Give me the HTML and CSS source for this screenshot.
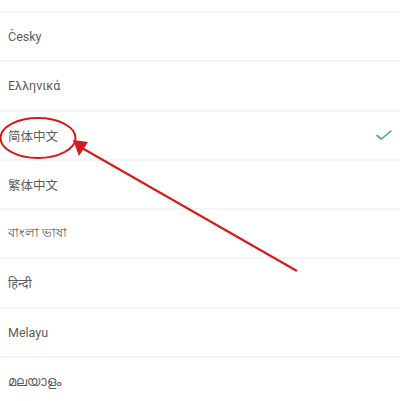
FILE: index.html
```html
<!DOCTYPE html>
<html>
<head>
<meta charset="utf-8">
<link rel="stylesheet" href="styles.css">
</head>
<body>
<div class="page">
  <ul class="lang-list">
    <li class="lang-item lang-item--cut"></li>
    <li class="lang-item"><span class="lang-name">Česky</span></li>
    <li class="lang-item"><span class="lang-name">Ελληνικά</span></li>
    <li class="lang-item lang-item--selected"><span class="lang-name">简体中文</span>
      <svg class="check" width="18" height="14" viewBox="0 0 18 14"><path d="M2 7.5 L6.5 11 L16 3" fill="none" stroke="#4caf50" stroke-width="1.6" stroke-linecap="round" stroke-linejoin="round"/></svg>
    </li>
    <li class="lang-item"><span class="lang-name">繁体中文</span></li>
    <li class="lang-item"><span class="lang-name">বাংলা ভাষা</span></li>
    <li class="lang-item"><span class="lang-name">हिन्दी</span></li>
    <li class="lang-item"><span class="lang-name">Melayu</span></li>
    <li class="lang-item"><span class="lang-name">മലയാളം</span></li>
  </ul>
  <svg class="annotation" width="400" height="401" viewBox="0 0 400 401">
    <ellipse cx="38" cy="138" rx="37.5" ry="20" fill="none" stroke="#d41c1c" stroke-width="2"/>
    <line x1="297" y1="271" x2="82" y2="148" stroke="#d41c1c" stroke-width="2.2"/>
    <polygon points="73,140 88,142 79,156" fill="#d41c1c"/>
  </svg>
</div>
</body>
</html>
```
FILE: styles.css
```css
html, body {
  margin: 0;
  padding: 0;
  background: #ffffff;
}
.page {
  position: relative;
  width: 400px;
  height: 401px;
  overflow: hidden;
  font-family: Roboto, "Noto Sans", "Noto Sans CJK SC", sans-serif;
}
.lang-list {
  list-style: none;
  margin: 0;
  padding: 0;
}
.lang-item {
  box-sizing: border-box;
  height: 49.3px;
  display: flex;
  align-items: center;
  justify-content: space-between;
  padding: 0 7px 0 8px;
  border-bottom: 2px solid #f5f5f5;
  font-size: 12.5px;
  color: #5c5c5c;
}
.lang-item--cut {
  height: 13px;
}
.annotation {
  position: absolute;
  left: 0;
  top: 0;
  pointer-events: none;
}
```
